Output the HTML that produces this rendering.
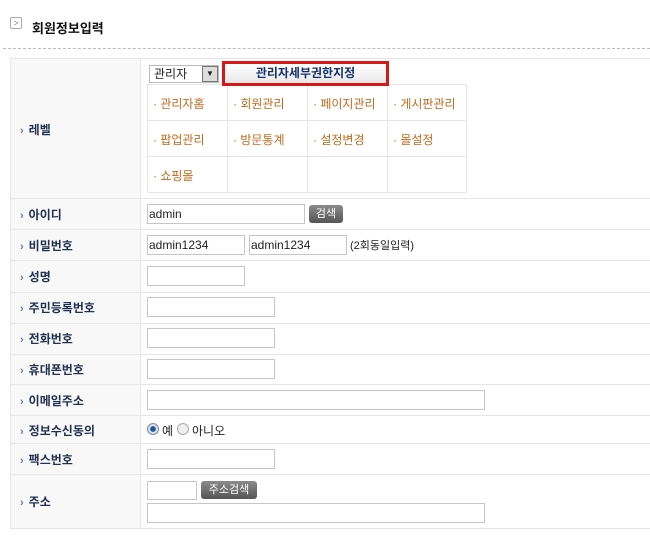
<!DOCTYPE html>
<html><head><meta charset="utf-8"><style>
*{margin:0;padding:0;box-sizing:border-box}
body{width:650px;height:537px;background:#fff;font-family:"Liberation Sans","Noto Sans CJK KR",sans-serif;font-size:12px;position:relative;overflow:hidden;color:#222}
.a{position:absolute}
.hl{position:absolute;left:10px;width:640px;height:1px;background:#e6e6e6}
.lbl{position:absolute;left:20px;font-weight:bold;color:#1f3050;font-size:12px}
.lbl:before{content:"›";color:#6a7a90;margin-right:5px;font-size:11px}
.in{position:absolute;border:1px solid #c6c6c6;background:#fff;height:20px;font-size:12px;padding-left:1px;line-height:18px}
.g{position:absolute;color:#c46a1c;font-size:12px}
.btn{position:absolute;background:linear-gradient(#8a8a8a,#555);color:#fff;border-radius:3px;font-size:11px;text-align:center;height:18px;line-height:18px}
</style></head><body>
<div class="a" style="left:10px;top:17px;width:12px;height:12px;border:1px solid #aaa;border-radius:2px;font-size:9px;line-height:10px;text-align:center;color:#888">&gt;</div>
<div class="a" style="left:32px;top:18px;font-weight:bold;font-size:13px;color:#111">회원정보입력</div>
<div class="a" style="left:3px;top:48px;width:647px;border-top:1px dashed #bbb"></div>
<div class="a" style="left:10px;top:58px;width:640px;height:471px;border:1px solid #e6e6e6;border-right:none"></div>
<div class="a" style="left:11px;top:59px;width:130px;height:469px;background:#f8f8f8;border-right:1px solid #e6e6e6"></div>
<div class="hl" style="top:198px"></div><div class="hl" style="top:229px"></div><div class="hl" style="top:260px"></div><div class="hl" style="top:292px"></div><div class="hl" style="top:323px"></div><div class="hl" style="top:354px"></div><div class="hl" style="top:384px"></div><div class="hl" style="top:415px"></div><div class="hl" style="top:443px"></div><div class="hl" style="top:474px"></div>
<div class="lbl" style="top:121px">레벨</div>
<div class="lbl" style="top:206px">아이디</div>
<div class="lbl" style="top:237px">비밀번호</div>
<div class="lbl" style="top:268px">성명</div>
<div class="lbl" style="top:299px">주민등록번호</div>
<div class="lbl" style="top:330px">전화번호</div>
<div class="lbl" style="top:361px">휴대폰번호</div>
<div class="lbl" style="top:392px">이메일주소</div>
<div class="lbl" style="top:422px">정보수신동의</div>
<div class="lbl" style="top:451px">팩스번호</div>
<div class="lbl" style="top:493px">주소</div>
<div class="a" style="left:147px;top:84px;width:320px;height:109px;border:1px solid #e6e6e6"></div>
<div class="a" style="left:227px;top:84px;width:1px;height:109px;background:#e6e6e6"></div>
<div class="a" style="left:307px;top:84px;width:1px;height:109px;background:#e6e6e6"></div>
<div class="a" style="left:387px;top:84px;width:1px;height:109px;background:#e6e6e6"></div>
<div class="a" style="left:147px;top:120px;width:320px;height:1px;background:#e6e6e6"></div>
<div class="a" style="left:147px;top:156px;width:320px;height:1px;background:#e6e6e6"></div>
<div class="a" style="left:149px;top:65px;width:70px;height:18px;border:1px solid #bbb;background:#fff;padding-left:4px;line-height:16px">관리자<div class="a" style="right:0;top:0;width:16px;height:16px;background:#ddd;border:1px solid #777;font-size:8px;text-align:center;line-height:14px">▼</div></div>
<div class="a" style="left:222px;top:61px;width:167px;height:25px;border:3px solid #d81818;background:linear-gradient(#fff,#e8e8e8);text-align:center;font-weight:bold;color:#163070;line-height:19px">관리자세부권한지정</div>
<div class="g" style="left:153px;top:95px">· 관리자홈</div><div class="g" style="left:233px;top:95px">· 회원관리</div><div class="g" style="left:313px;top:95px">· 페이지관리</div><div class="g" style="left:393px;top:95px">· 게시판관리</div>
<div class="g" style="left:153px;top:131px">· 팝업관리</div><div class="g" style="left:233px;top:131px">· 방문통계</div><div class="g" style="left:313px;top:131px">· 설정변경</div><div class="g" style="left:393px;top:131px">· 몰설정</div>
<div class="g" style="left:153px;top:167px">· 쇼핑몰</div>
<div class="in" style="left:147px;top:204px;width:158px">admin</div>
<div class="btn" style="left:309px;top:205px;width:34px">검색</div>
<div class="in" style="left:147px;top:235px;width:98px">admin1234</div>
<div class="in" style="left:249px;top:235px;width:98px">admin1234</div>
<div class="a" style="left:350px;top:237px;font-size:11px">(2회동일입력)</div>
<div class="in" style="left:147px;top:266px;width:98px"></div>
<div class="in" style="left:147px;top:297px;width:128px"></div>
<div class="in" style="left:147px;top:328px;width:128px"></div>
<div class="in" style="left:147px;top:359px;width:128px"></div>
<div class="in" style="left:147px;top:390px;width:338px"></div>
<div class="a" style="left:147px;top:423px;width:12px;height:12px;border-radius:50%;border:1px solid #889;background:radial-gradient(#1a5a9a 35%,#dde 45%)"></div>
<div class="a" style="left:162px;top:422px">예</div>
<div class="a" style="left:177px;top:423px;width:12px;height:12px;border-radius:50%;border:1px solid #aaa;background:#eee"></div>
<div class="a" style="left:192px;top:422px">아니오</div>
<div class="in" style="left:147px;top:449px;width:128px"></div>
<div class="in" style="left:147px;top:481px;width:50px;height:19px"></div>
<div class="btn" style="left:201px;top:481px;width:56px">주소검색</div>
<div class="in" style="left:147px;top:503px;width:338px"></div>
</body></html>
